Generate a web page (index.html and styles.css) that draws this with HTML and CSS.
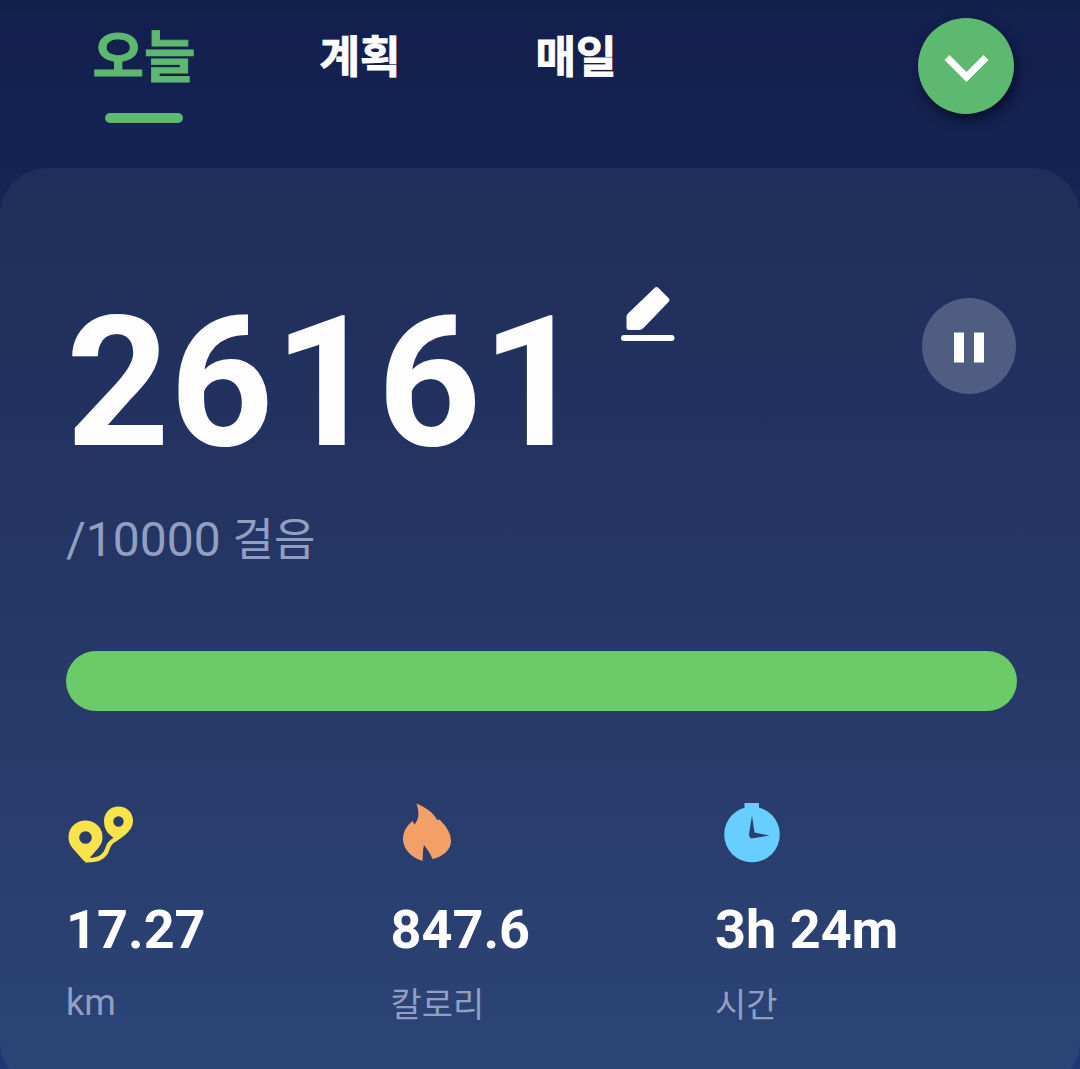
FILE: index.html
```html
<!DOCTYPE html>
<html lang="ko">
<head>
<meta charset="utf-8">
<title>오늘</title>
<link rel="stylesheet" href="styles.css">
</head>
<body>
<header class="header">
  <nav class="tabs">
    <a class="tab tab-active">오늘</a>
    <a class="tab">계획</a>
    <a class="tab">매일</a>
  </nav>
  <button class="expand" aria-label="펼치기">
    <svg width="96" height="96" viewBox="0 0 96 96"><path d="M29 39.5 48.500 59 68 39.500" fill="none" stroke="#fff" stroke-width="7"/></svg>
  </button>
</header>
<main class="card">
  <section class="summary">
    <div class="steps">26161</div>
    <svg class="edit" width="54" height="56" viewBox="0 0 54 56"><path d="M5.500 29.500Q5.500 28 6.500 27L33.500 1Q35.500 -1 37.500 1L47.500 11Q49.500 13 47.500 15L22.500 41Q20.500 43 18 43H8Q5.500 43 5.500 41Z" fill="#fdfdfe"/><rect y="48" width="53.500" height="6" rx="3" fill="#fdfdfe"/></svg>
    <button class="pause" aria-label="일시정지">
      <svg width="94" height="96" viewBox="0 0 94 96"><path d="M32 34.500H42V64.500H32ZM52 34.500H62V64.500H52Z" fill="#fff"/></svg>
    </button>
  </section>
  <p class="goal">/10000 <span class="goal-unit">걸음</span></p>
  <div class="progress"></div>
  <section class="stats">
    <div class="stat">
      <svg class="icon" width="66" height="60" viewBox="0 0 66 60"><g fill="#f8e34b"><path fill-rule="evenodd" d="M18.500 17.500C28 17.500 35.500 24.500 35.500 34C35.500 42 31 45 24 53.500L20 58Q18 59 16 57L9 49C4 43.500 1.500 40 1.500 34C1.500 24.500 9 17.500 18.500 17.500ZM18.500 28.200A6.300 6.300 0 1 0 18.500 40.800A6.300 6.300 0 1 0 18.500 28.200Z"/><path fill-rule="evenodd" d="M51.500 3.500C59.500 3.500 66 9.500 66 17.500C66 24 62.500 28 58 32L50 38L41 30C38 26.500 37 22 37 18C37 9.500 43.500 3.500 51.500 3.500ZM51.500 13.300A5.200 5.200 0 1 0 51.500 23.700A5.200 5.200 0 1 0 51.500 13.300Z"/></g><path d="M18 57.300C29 57.800 35 55.500 38.500 50C41.500 45 40.500 40 49 36" fill="none" stroke="#f8e34b" stroke-width="4.500"/></svg>
      <strong class="value">17.27</strong>
      <span class="label label-latin">km</span>
    </div>
    <div class="stat">
      <svg class="icon icon-fire" width="50" height="60" viewBox="0 0 50 60"><path d="M14.500 .5C25 5 32 10.500 35 17L37.500 16.500C43 22 49 29 49 38C49 47 41 53.500 30.500 56C28 50 25 46 22 42C20.500 47 21 53 20.500 58C10 55 1 46.500 1 36C1 29 4.500 23 10.500 18L12.500 21.500C17 16 17.500 10 14.500 .5Z" fill="#f2a065"/></svg>
      <strong class="value">847.6</strong>
      <span class="label">칼로리</span>
    </div>
    <div class="stat">
      <svg class="icon icon-clock" width="56" height="60" viewBox="0 0 56 60"><path d="M20.500 0H35V5H20.500Z" fill="#68ceff"/><circle cx="28" cy="31.500" r="27.800" fill="#68ceff"/><path d="M28 12.500 30.500 29.500 45.500 32.500 27.500 35.500Q24.500 34.500 25 31Z" fill="#28406f"/></svg>
      <strong class="value">3h 24m</strong>
      <span class="label">시간</span>
    </div>
  </section>
</main>
</body>
</html>
```
FILE: styles.css
```css
* {
  box-sizing: border-box;
}

body {
  margin: 0;
  height: 1069px;
  overflow: hidden;
  background: linear-gradient(#0f204b 0, #13204f 30px, #142452 165px, #203873 1069px);
  color: #fff;
  font-family: Roboto, "Noto Sans CJK KR", sans-serif;
}

button {
  display: block;
  padding: 0;
  border: 0;
  border-radius: 50%;
}

.header {
  display: flex;
  justify-content: space-between;
  height: 167.500px;
  padding: 17.500px 66px 0 36px;
}

.tabs {
  display: grid;
  grid-template-columns: repeat(3, 216px);
}

.tab {
  display: flex;
  flex-direction: column;
  align-items: center;
  font-size: 44px;
  font-weight: 700;
  line-height: 80px;
  -webkit-text-stroke: 0.9px currentColor;
}

.tab-active {
  color: #5eb970;
  font-size: 56px;
}

.tab-active::after {
  content: "";
  width: 78px;
  height: 10px;
  margin-top: 15.500px;
  border-radius: 5px;
  background: #5eb970;
}

.expand {
  width: 96px;
  height: 96px;
  background: #5eb970;
  box-shadow: 3px 6px 12px rgba(0, 8, 30, 0.7);
}

.card {
  height: 920px;
  padding: 119.500px 63px 0 66px;
  border-radius: 48px;
  background: linear-gradient(#1f2e5b, #223260 240px, #2c4476 900px);
}

.summary {
  display: flex;
  align-items: flex-start;
  height: 181px;
}

.steps {
  width: 555px;
  margin-top: 6px;
  color: #fdfdfe;
  font-size: 181px;
  font-weight: 700;
  line-height: 181px;
}

.pause {
  width: 94px;
  height: 96px;
  margin: 11px 1px 0 auto;
  background: #4f5d82;
}

.goal {
  height: 60px;
  margin: 42px 0 0;
  color: #929fc2;
  font-size: 48px;
  line-height: 60px;
  white-space: nowrap;
}

.goal-unit {
  font-size: 45px;
}

.progress {
  width: 951px;
  height: 60px;
  margin-top: 80.500px;
  border-radius: 30px;
  background: #6acb68;
}

.stats {
  display: grid;
  grid-template-columns: repeat(3, 324.5px);
  margin-top: 92.500px;
}

.stat {
  display: flex;
  flex-direction: column;
  align-items: flex-start;
}

.icon {
  margin-left: 1px;
}

.icon-fire {
  margin-left: 11px;
}

.icon-clock {
  margin-left: 8.500px;
}

.value {
  margin-top: 37px;
  font-size: 54px;
  line-height: 60px;
}

.label {
  margin-top: 22px;
  color: #929fc2;
  font-size: 34px;
  line-height: 46px;
}

.label-latin {
  margin-top: 20px;
  font-size: 36px;
}
```
